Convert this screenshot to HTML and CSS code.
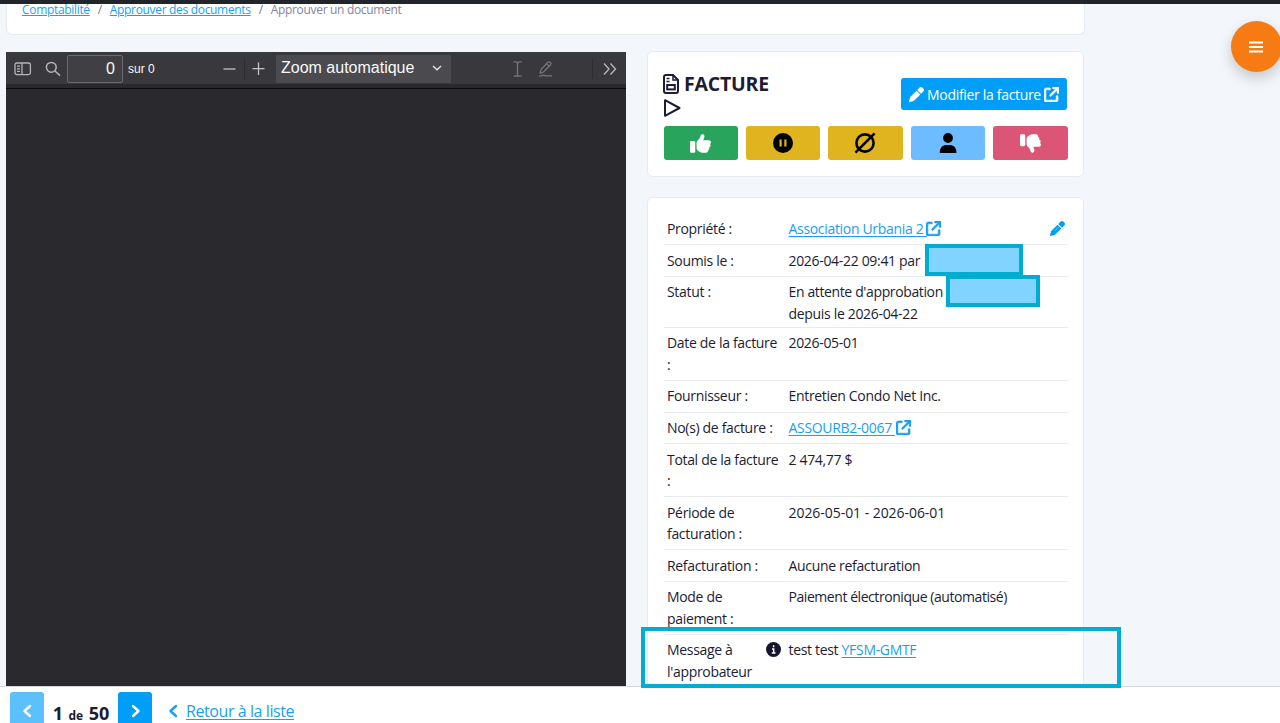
FILE: index.html
```html
<!DOCTYPE html>
<html lang="fr">
<head>
    <meta charset="UTF-8">
    <meta name="viewport" content="width=device-width, initial-scale=1.0">
    <title>Approuver un document</title>
    <link rel="stylesheet" href="styles.css">
</head>
<body>
    <!-- Shared icons -->
    <svg class="sprite" width="0" height="0">
        <symbol id="i-pencil" viewBox="0 0 512 512"><path d="M36 360c4-14 12-27 22-37L258 124 388 254 189 453c-10 10-23 18-37 22L31 510c-18 5-35-12-30-30zM281 101l82-82c25-25 65-25 90 0l40 40c25 25 25 65 0 90l-82 82z"/><path d="M171 331L315 187" stroke="#fff" stroke-width="14"/></symbol>
        <symbol id="i-external" viewBox="0 0 512 512"><path d="M320 0c-17.7 0-32 14.3-32 32s14.3 32 32 32h82.7L201.4 265.4c-12.5 12.5-12.5 32.8 0 45.3s32.8 12.5 45.3 0L448 109.3V192c0 17.7 14.3 32 32 32s32-14.3 32-32V32c0-17.7-14.3-32-32-32H320zM80 32C35.8 32 0 67.8 0 112V432c0 44.2 35.8 80 80 80H400c44.2 0 80-35.8 80-80V320c0-17.7-14.3-32-32-32s-32 14.3-32 32V432c0 8.8-7.2 16-16 16H80c-8.8 0-16-7.2-16-16V112c0-8.8 7.2-16 16-16H192c17.7 0 32-14.3 32-32s-14.3-32-32-32H80z" stroke="currentColor" stroke-width="20"/></symbol>
        <symbol id="i-thumb" viewBox="0 0 512 512"><path d="M313.4 32.9c26 5.2 42.9 30.5 37.7 56.5l-2.3 11.4c-5.3 26.7-15.1 52.1-28.8 75.2H464c26.5 0 48 21.5 48 48c0 18.5-10.5 34.6-25.9 42.6C497 275.4 504 288.9 504 304c0 23.4-16.8 42.9-38.9 47.1c4.4 7.3 6.9 15.8 6.9 24.9c0 21.3-13.9 39.4-33.1 45.6c.7 3.3 1.1 6.8 1.1 10.4c0 26.5-21.5 48-48 48H294.5c-19 0-37.5-5.6-53.3-16.1l-38.5-25.7C176 420.4 160 390.4 160 358.3V320 272 247.1c0-29.2 13.3-56.7 36-75l7.4-5.9c26.5-21.2 44.6-51 51.2-84.2l2.3-11.4c5.2-26 30.5-42.9 56.5-37.7zM32 192H96c17.7 0 32 14.3 32 32V448c0 17.7-14.3 32-32 32H32c-17.7 0-32-14.3-32-32V224c0-17.7 14.3-32 32-32z"/></symbol>
        <symbol id="i-chevron" viewBox="0 0 10 14"><path d="M2 2l5.500 5L2 12" fill="none" stroke="currentColor" stroke-width="2.4" stroke-linecap="round" stroke-linejoin="round"/></symbol>
    </svg>

    <div class="topbar"></div>

    <main>
        <nav class="breadcrumb">
            <a href="#">Comptabilité</a><span>/</span><a href="#">Approuver des documents</a><span>/</span><em>Approuver un document</em>
        </nav>

        <div class="columns">
            <section class="pdf">
                <div class="pdf-toolbar">
                    <svg class="pdf-sidebar" width="18" height="14" viewBox="0 0 18 14" fill="none" stroke="#b5b5b8" stroke-width="1.3"><rect x="1" y="1" width="15.4" height="11.6" rx="1.8"/><path d="M8 1v11.6M3 4.2h3M3 6.8h3M3 9.4h3"/></svg>
                    <svg class="pdf-search" width="16" height="16" viewBox="0 0 16 16" fill="none" stroke="#b5b5b8" stroke-width="1.5"><circle cx="6.3" cy="6.3" r="4.9"/><path d="M10 10l5 4.6"/></svg>
                    <input class="pdf-page" type="text" value="0">
                    <span class="pdf-count">sur 0</span>
                    <svg class="pdf-minus" width="13" height="13" viewBox="0 0 13 13" stroke="#c4c4c6" stroke-width="1.3"><path d="M.5 7h12"/></svg>
                    <i class="pdf-sep"></i>
                    <svg class="pdf-plus" width="13" height="13" viewBox="0 0 13 13" stroke="#c4c4c6" stroke-width="1.3"><path d="M.5 6.7h12M6.5.5v12.4"/></svg>
                    <div class="pdf-zoom">Zoom automatique
                        <svg width="10" height="6" viewBox="0 0 10 6" fill="none" stroke="#e8e8e8" stroke-width="1.4"><path d="M1 1l4 3.7L9 1"/></svg>
                    </div>
                    <svg class="pdf-text" width="9" height="16" viewBox="0 0 9 16" fill="none" stroke="#77777b" stroke-width="1.3"><path d="M.5.8h2.2q1.8 0 1.8 1.6v11.2q0 1.6-1.8 1.6H.5M8.5.8H6.3q-1.8 0-1.8 1.6M8.5 15.2H6.3q-1.8 0-1.8-1.6"/></svg>
                    <svg class="pdf-draw" width="15" height="16" viewBox="0 0 15 16" fill="none" stroke="#77777b" stroke-width="1.2"><path d="M2 12.5l1-4L9.8 1.3q1.4-1 2.6.2 1.1 1.2 0 2.5L5.5 11 2 12.5M8.5 2.7l2.8 2.7M1 14.8h3q2-1.4 3.2 0H14"/></svg>
                    <i class="pdf-sep pdf-sep-end"></i>
                    <svg class="pdf-more" width="14" height="12" viewBox="0 0 14 12" fill="none" stroke="#b5b5b8" stroke-width="1.4"><path d="M1 .6L6 6l-5 5.4M7.5.6l5 5.4-5 5.4"/></svg>
                </div>
            </section>

            <div class="side">
                <section class="card actions">
                    <div class="actions-head">
                        <h1>
                            <svg width="16" height="20" viewBox="0 0 16 20" fill="none" stroke="currentColor" stroke-width="2"><path d="M3 1h7l5 5v11q0 2-2 2H3q-2 0-2-2V3q0-2 2-2z"/><path d="M10 1v5h5M3.5 4.5h3M3.5 7.5h3" stroke-width="1.5"/><rect x="4.2" y="11" width="7.6" height="4.4"/></svg>
                            FACTURE
                        </h1>
                        <a class="btn-edit" href="#"><svg width="15" height="15"><use href="#i-pencil"/></svg>Modifier la facture<svg width="15" height="15"><use href="#i-external"/></svg></a>
                    </div>
                    <svg class="play" width="18" height="18" viewBox="0 0 18 18" fill="none" stroke="currentColor" stroke-width="2" stroke-linejoin="round"><path d="M2 1.2v15.6L16.5 9z"/></svg>
                    <div class="buttons">
                        <button class="green"><svg width="21" height="21"><use href="#i-thumb"/></svg></button>
                        <button class="yellow"><svg width="20" height="20" viewBox="0 0 20 20"><circle cx="10" cy="10" r="10"/><path d="M7.6 6.5v7M12.4 6.5v7" stroke="#dfb41f" stroke-width="2.2"/></svg></button>
                        <button class="yellow"><svg width="22" height="22" viewBox="0 0 22 22" fill="none" stroke="#000" stroke-width="2.6"><circle cx="11" cy="11" r="8.6"/><path d="M1.4 20.6L20.6 1.4"/></svg></button>
                        <button class="blue"><svg width="18" height="20" viewBox="0 0 18 20"><circle cx="9" cy="5" r="4.9"/><path d="M.8 20v-1.2C.8 14.5 4 12 7.4 12h3.2c3.600 0 6.800 2.500 6.800 6.800V20z"/></svg></button>
                        <button class="red"><svg class="flip" width="21" height="21"><use href="#i-thumb"/></svg></button>
                    </div>
                </section>

                <section class="card details">
                    <dl>
                        <div class="row"><dt>Propriété :</dt><dd><a href="#">Association Urbania 2 <svg class="ext" width="15" height="15"><use href="#i-external"/></svg></a></dd><svg class="row-edit" width="15" height="15"><use href="#i-pencil"/></svg></div>
                        <div class="row"><dt>Soumis le :</dt><dd>2026-04-22 09:41 par <span class="mask mask-author"></span></dd></div>
                        <div class="row row-status"><dt>Statut :</dt><dd><span class="status">En attente d'approbation</span> <span class="mask mask-status"></span><br>depuis le 2026-04-22</dd></div>
                        <div class="row"><dt>Date de la facture :</dt><dd>2026-05-01</dd></div>
                        <div class="row"><dt>Fournisseur :</dt><dd>Entretien Condo Net Inc.</dd></div>
                        <div class="row"><dt>No(s) de facture :</dt><dd><a href="#">ASSOURB2-0067 <svg class="ext ext-invoice" width="15" height="15"><use href="#i-external"/></svg></a></dd></div>
                        <div class="row"><dt>Total de la facture :</dt><dd>2 474,77 $</dd></div>
                        <div class="row"><dt>Période de<br>facturation :</dt><dd class="period">2026-05-01 - 2026-06-01</dd></div>
                        <div class="row"><dt>Refacturation :</dt><dd>Aucune refacturation</dd></div>
                        <div class="row"><dt>Mode de<br>paiement :</dt><dd class="payment">Paiement électronique (automatisé)</dd></div>
                        <div class="row row-message">
                            <dt>Message à<br>l'approbateur
                                <svg class="info" width="15" height="15" viewBox="0 0 15 15"><circle cx="7.5" cy="7.5" r="7.5" fill="#15152f"/><path d="M7.6 3.3v1.9M6 7h1.7v3.8M5.8 11h3.7" stroke="#fff" stroke-width="1.5" fill="none"/></svg>
                            </dt>
                            <dd>test test <a href="#">YFSM-GMTF</a></dd>
                        </div>
                    </dl>
                </section>
            </div>
        </div>
    </main>

    <footer>
        <button class="nav-btn prev"><svg width="10" height="14"><use href="#i-chevron"/></svg></button>
        <strong>1 <small>de</small> 50</strong>
        <button class="nav-btn next"><svg width="10" height="14"><use href="#i-chevron"/></svg></button>
        <a class="back" href="#"><svg class="flip-x" width="10" height="14"><use href="#i-chevron"/></svg><span>Retour à la liste</span></a>
    </footer>

    <div class="highlight"></div>
    <button class="fab"><svg width="14" height="12" viewBox="0 0 14 12" stroke="#fff" stroke-width="2"><path d="M0 1.5h14M0 6h14M0 10.5h14"/></svg></button>
</body>
</html>
```
FILE: styles.css
```css
* {
    box-sizing: border-box;
}

body {
    margin: 0;
    height: 723px;
    display: flex;
    flex-direction: column;
    overflow: hidden;
    background: #f3f7fb;
    color: #1c1c33;
    font-family: "Open Sans", "Noto Sans", sans-serif;
    font-size: 14px;
    letter-spacing: -0.32px;
}

.sprite {
    position: absolute;
}

svg {
    flex: none;
}

svg:not([fill]) {
    fill: currentColor;
}

a {
    color: #189ff2;
    text-underline-offset: 2px;
}

button {
    border: 0;
    padding: 0;
    display: flex;
    align-items: center;
    justify-content: center;
    border-radius: 3px;
}

.topbar {
    height: 4px;
    background: #212529;
    flex: none;
}

main {
    flex: 1;
    min-height: 0;
    overflow: hidden;
    padding-left: 6px;
}

.breadcrumb {
    width: 1079px;
    height: 31px;
    padding-left: 15px;
    background: #fff;
    border: 1px solid #e6ebf0;
    border-top: 0;
    border-radius: 0 0 6px 6px;
    font-size: 12px;
    line-height: 11px;
    letter-spacing: -0.32px;
    margin-bottom: 17px;
    display: flex;
}

.breadcrumb a {
    text-underline-offset: 1px;
}

.breadcrumb span {
    width: 20px;
    text-align: center;
    color: #77778a;
}

.breadcrumb em {
    font-style: normal;
    color: #85859a;
}

.columns {
    display: flex;
    align-items: flex-start;
    gap: 21px;
}

/* PDF viewer */
.pdf {
    width: 620px;
    height: 640px;
    background: #2a2a2e;
}

.pdf-toolbar {
    height: 37px;
    padding: 0 9px 4px 8px;
    display: flex;
    align-items: center;
    background: linear-gradient(#38383d 32px, #29292d 32px, #29292d 36px, #0c0c0d 36px);
    color: #f9f9fa;
    font-family: "Liberation Sans", Arial, sans-serif;
    letter-spacing: 0;
}

.pdf-search {
    margin: 0 6px 0 13px;
}

.pdf-page {
    width: 56px;
    height: 28px;
    padding: 0 7px;
    background: #404044;
    border: 1px solid #6b6b6e;
    border-radius: 2px;
    color: #f9f9fa;
    text-align: right;
    font: 16px "Liberation Sans", Arial, sans-serif;
}

.pdf-count {
    margin-left: 5px;
    width: 95px;
    font-size: 12px;
}

.pdf-sep {
    width: 1px;
    height: 20px;
    margin: 0 7px 0 8px;
    background: #2d2d31;
}

.pdf-zoom {
    margin-left: 11px;
    width: 175px;
    height: 28px;
    padding: 0 9px 2px 5px;
    display: flex;
    align-items: center;
    justify-content: space-between;
    background: #4a4a4f;
    font-size: 16px;
}

.pdf-text {
    margin-left: 62px;
}

.pdf-draw {
    margin-left: 16px;
}

.pdf-sep-end {
    margin-left: auto;
    margin-right: 10px;
}

/* Right column */
.side {
    width: 437px;
}

.card {
    background: #fff;
    border: 1px solid #e6ebf0;
    border-radius: 6px;
    padding: 15px;
}

.actions {
    margin-top: -1px;
    height: 126px;
    margin-bottom: 20px;
}

.actions-head {
    display: flex;
    justify-content: space-between;
    height: 30px;
}

h1 {
    margin: 1px 0 0;
    display: flex;
    align-items: center;
    gap: 5px;
    font-size: 19.5px;
    line-height: 30px;
    height: 31px;
    letter-spacing: -0.2px;
}

.btn-edit {
    margin: 11px 1px 0 0;
    height: 32px;
    width: 166px;
    display: flex;
    align-items: center;
    justify-content: center;
    gap: 3px;
    background: #009ef7;
    color: #fff;
    border-radius: 3px;
    text-decoration: none;
}

.play {
    display: block;
    margin: 2px 0 9px;
}

.buttons {
    display: grid;
    grid-template-columns: repeat(5, 1fr);
    gap: 8px;
    margin: 0 0.5px;
}

.buttons button {
    height: 34px;
    color: #000;
}

.buttons .green {
    background: #28a45c;
    color: #fff;
}

.yellow {
    background: #dfb41f;
}

.blue {
    background: #6cbcff;
}

.buttons .red {
    background: #db5577;
    color: #fff;
}

.flip {
    transform: scaleY(-1);
}

.flip-x,
.prev svg {
    transform: scaleX(-1);
}

dl {
    margin: 0 0 0 1px;
}

.row {
    display: flex;
    padding: 4.2px 0 5.2px 3px;
    line-height: 21.3px;
    border-bottom: 1px solid #e9ebee;
}

.row:first-child {
    padding-top: 4.7px;
    padding-bottom: 5.5px;
}

.row-status {
    padding-top: 4.2px;
    padding-bottom: 3.2px;
}

.row-message {
    border-bottom: 0;
}

dt {
    width: 121.5px;
    padding-right: 8px;
    position: relative;
}

dd {
    margin: 0;
    flex: 1;
    position: relative;
    white-space: nowrap;
}

.status {
    letter-spacing: -0.37px;
}

.period {
    letter-spacing: -0.05px;
}

.payment {
    letter-spacing: -0.44px;
}

.ext {
    vertical-align: -2px;
    margin-left: -1px;
}

.ext-invoice {
    margin-left: 1px;
}

.row-edit {
    margin: 3px 3px 0 0;
    color: #009ef7;
}

.info {
    position: absolute;
    right: 7.5px;
    top: 3px;
}

.mask {
    position: absolute;
    top: -6px;
    height: 32px;
    background: #80d4ff;
    border: 4px solid #00accf;
    z-index: 1;
}

.mask-author {
    left: 136px;
    width: 98px;
}

.mask-status {
    left: 157px;
    width: 94px;
}

/* Bottom bar */
footer {
    height: 37px;
    flex: none;
    border-top: 1px solid #d5d8db;
    background: #fff;
    display: flex;
    align-items: flex-start;
    padding: 5px 0 0 10px;
}

.nav-btn {
    width: 34px;
    height: 38px;
    color: #fff;
    background: #009ef7;
}

.nav-btn.prev {
    background: #5bc0fb;
}

.next svg {
    margin-left: 2px;
}

footer strong {
    width: 74px;
    text-align: center;
    font-size: 18px;
    line-height: 43px;
    letter-spacing: 0;
    word-spacing: 0.8px;
}

footer small {
    font-size: 12px;
}

.back {
    margin-left: 16px;
    display: flex;
    align-items: center;
    gap: 8px;
    height: 38px;
    font-size: 16px;
    letter-spacing: -0.42px;
    text-decoration: none;
}

.back span {
    text-decoration: underline;
}

.highlight {
    position: absolute;
    left: 641px;
    top: 627px;
    width: 480px;
    height: 61px;
    border: 4px solid #00accf;
}

.fab {
    position: absolute;
    left: 1231px;
    top: 21px;
    width: 51px;
    height: 51px;
    padding-right: 2px;
    border-radius: 50%;
    background: #f67b13;
    box-shadow: 0 6px 14px rgba(0, 0, 0, 0.2);
}
```
